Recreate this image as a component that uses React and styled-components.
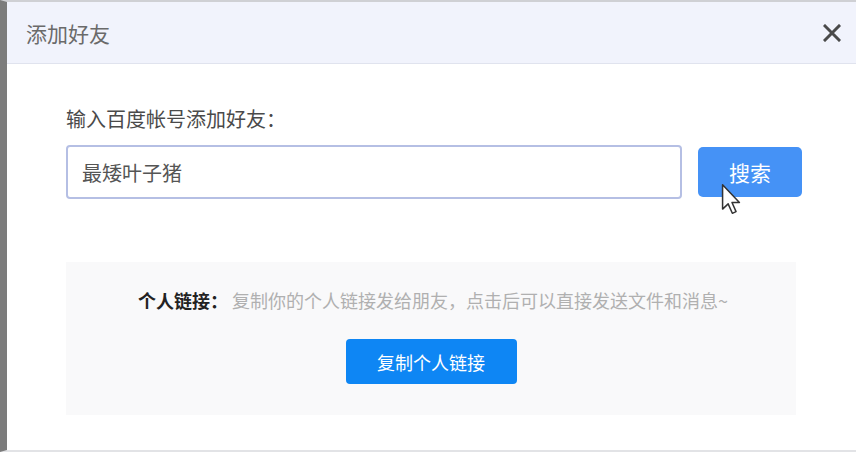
import React from "react"
import styled, { createGlobalStyle } from "styled-components"

const GlobalStyle = createGlobalStyle`
  html, body {
    margin: 0;
    padding: 0;
    background: #ffffff;
  }
  body {
    font-family: "Noto Sans CJK SC", "Noto Sans", sans-serif;
  }
`

const Frame = styled.div`
  width: 856px;
  height: 452px;
  box-sizing: border-box;
  border-left: 7px solid #7c7c7c;
  border-top: 2px solid #cfd0d4;
  border-bottom: 2px solid #e2e3e6;
  display: flex;
  flex-direction: column;
  overflow: hidden;
  position: relative;
`

const Header = styled.div`
  height: 61px;
  flex: none;
  display: flex;
  align-items: center;
  justify-content: space-between;
  padding: 0 15px 0 19px;
  background: #f1f3fc;
  border-bottom: 1px solid #e0e3ee;
`

const Title = styled.div`
  font-size: 21px;
  color: #6a6a6a;
`

const Close = styled.div`
  width: 18px;
  height: 18px;
  display: flex;
  cursor: pointer;
`

const Body = styled.div`
  flex: 1;
  padding: 43px 0 0 59px;
  display: flex;
  flex-direction: column;
`

const Label = styled.div`
  font-size: 20px;
  line-height: 24px;
  color: #4a4a4a;
`

const SearchRow = styled.div`
  display: flex;
  align-items: center;
  gap: 16px;
  margin-top: 14px;
`

const Input = styled.input`
  flex: none;
  width: 616px;
  height: 54px;
  box-sizing: border-box;
  border: 2px solid #b5bfe4;
  border-radius: 4px;
  padding: 0 14px;
  font-family: inherit;
  font-size: 20px;
  color: #555;
  outline: none;
`

const Button = styled.button`
  flex: none;
  width: ${p => p.w}px;
  height: ${p => p.h}px;
  border: none;
  border-radius: ${p => p.r || 4}px;
  background: ${p => p.bg};
  color: #ffffff;
  font-family: inherit;
  font-size: ${p => p.fs || 18}px;
  cursor: pointer;
  padding: 0;
`

const Panel = styled.div`
  width: 730px;
  height: 153px;
  box-sizing: border-box;
  margin-top: 63px;
  background: #f9f9fa;
  padding-top: 26px;
  display: flex;
  flex-direction: column;
  align-items: center;
`

const LinkText = styled.div`
  font-size: 18px;
  line-height: 24px;
  color: #b0b0b0;
  white-space: nowrap;
  margin-bottom: 27px;
  padding-left: 4px;

  b {
    color: #222;
    font-weight: 700;
    margin-right: 4px;
  }
`

const Pointer = styled.svg`
  position: absolute;
  left: 713px;
  top: 181px;
  pointer-events: none;
`

export default function App() {
  return (
    <>
      <GlobalStyle />
      <Frame>
        <Header>
          <Title>添加好友</Title>
          <Close>
            <svg width="18" height="18" viewBox="0 0 18 18">
              <path d="M2 2 L16 16 M16 2 L2 16" stroke="#4a4a4a" strokeWidth="3" strokeLinecap="square" />
            </svg>
          </Close>
        </Header>
        <Body>
          <Label>输入百度帐号添加好友：</Label>
          <SearchRow>
            <Input defaultValue="最矮叶子猪" />
            <Button w={104} h={50} r={5} bg="#4592f6" fs={21}>搜索</Button>
          </SearchRow>
          <Panel>
            <LinkText>
              <b>个人链接：</b>复制你的个人链接发给朋友，点击后可以直接发送文件和消息~
            </LinkText>
            <Button w={171} h={45} bg="#0e86f4">复制个人链接</Button>
          </Panel>
        </Body>
        <Pointer width="22" height="32" viewBox="0 0 12 19">
          <path
            d="M1 1 L1 15.5 L4.3 12.4 L6.8 18 L9 17 L6.6 11.6 L11 11.6 Z"
            fill="#ffffff"
            stroke="#333"
            strokeWidth="0.9"
            strokeLinejoin="round"
          />
        </Pointer>
      </Frame>
    </>
  )
}
